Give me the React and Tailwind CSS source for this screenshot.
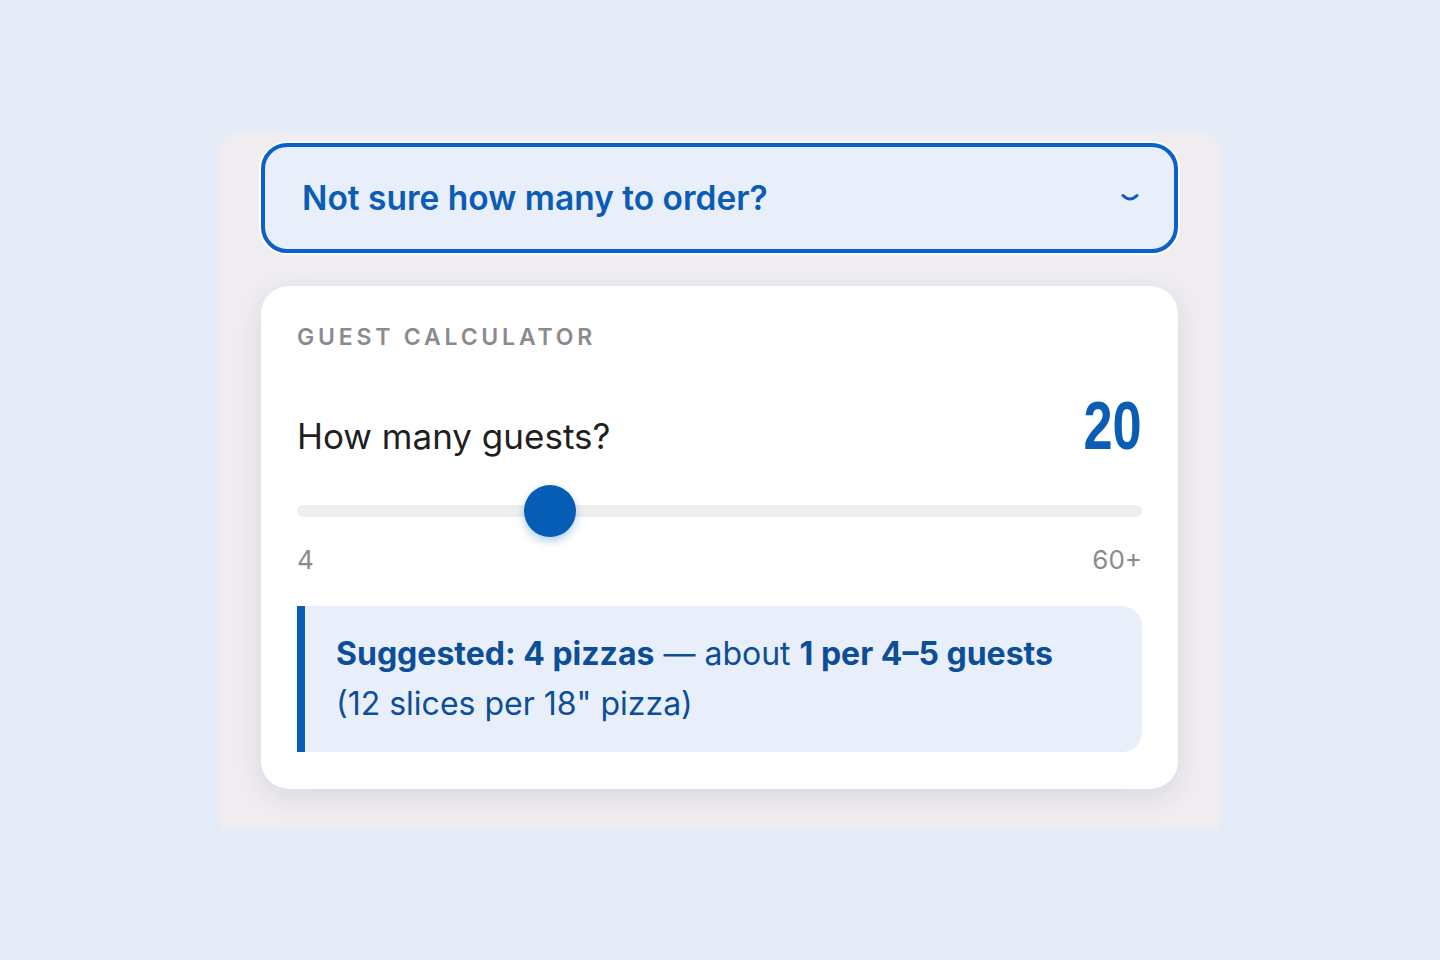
import { useState } from "react";

const ChevronDown = () => (
  <svg width="18" height="10" viewBox="0 0 18 10" fill="none">
    <path d="M2 2.5 Q9 9.5 16 2.5" stroke="#0a5cc0" strokeWidth="3" strokeLinecap="round" />
  </svg>
);

const THUMB = 52;

const GuestCalculator = () => {
  const [guests, setGuests] = useState(20);
  const min = 4;
  const max = 60;
  const ratio = (guests - min) / (max - min);

  return (
    <div className="bg-white rounded-[28px] shadow-[0_8px_28px_rgba(40,40,60,0.10)] px-9 pt-[40px] pb-[37px]">
      <div className="text-[23px] font-semibold tracking-[0.165em] text-[#8b8b8f] leading-none">
        GUEST CALCULATOR
      </div>

      <div className="flex items-baseline justify-between mt-[42px]">
        <span className="text-[35px] text-[#1f1f22] leading-none">How many guests?</span>
        <span
          className="inline-block text-[68px] font-bold text-[#0a5cb5] leading-none scale-x-[0.77] origin-right"
          style={{ fontFamily: '"Liberation Sans", Arial, sans-serif' }}
        >
          {guests}
        </span>
      </div>

      <div className="relative mt-[46px] h-3 rounded-full bg-[#efeeef]">
        <div
          className="absolute top-1/2 w-[52px] h-[52px] -mt-[26px] rounded-full bg-[#065db5] shadow-[0_4px_10px_rgba(6,93,181,0.30)]"
          style={{ left: `calc((100% - ${THUMB}px) * ${ratio})` }}
          onClick={() => setGuests(guests)}
        />
      </div>

      <div className="flex justify-between mt-[30px] text-[26px] text-[#8b8b8f] leading-none">
        <span>4</span>
        <span>60+</span>
      </div>

      <div className="mt-[33px] border-l-[8px] border-[#0a5cb5] bg-[#e9eefb] rounded-r-[20px] pl-[31px] pr-6 py-[23px] text-[32px] leading-[50px] text-[#0c4f98]">
        <span className="font-bold">Suggested: 4 pizzas</span> — about{" "}
        <span className="font-bold">1 per 4–5 guests</span>
        <br />
        (12 slices per 18" pizza)
      </div>
    </div>
  );
};

const App = () => {
  return (
    <div className="min-h-[960px] bg-[#e6ecf7] pt-[133px]" style={{ fontFamily: 'Inter, "Noto Sans", sans-serif' }}>
      <div className="w-[1000px] h-[695px] mx-auto bg-[#efedf0] rounded-t-[20px] pt-[10px] pl-[41px] pr-[42px]">
        <button className="w-full h-[110px] flex items-center justify-between rounded-[26px] border-4 border-[#0a60cc] ring-2 ring-white bg-[#e9eefb] pl-[37px] pr-[35px]">
          <span className="text-[33.5px] font-semibold text-[#0a5cb5]">Not sure how many to order?</span>
          <ChevronDown />
        </button>

        <div className="mt-[33px]">
          <GuestCalculator />
        </div>
      </div>
    </div>
  );
};

export default App;
